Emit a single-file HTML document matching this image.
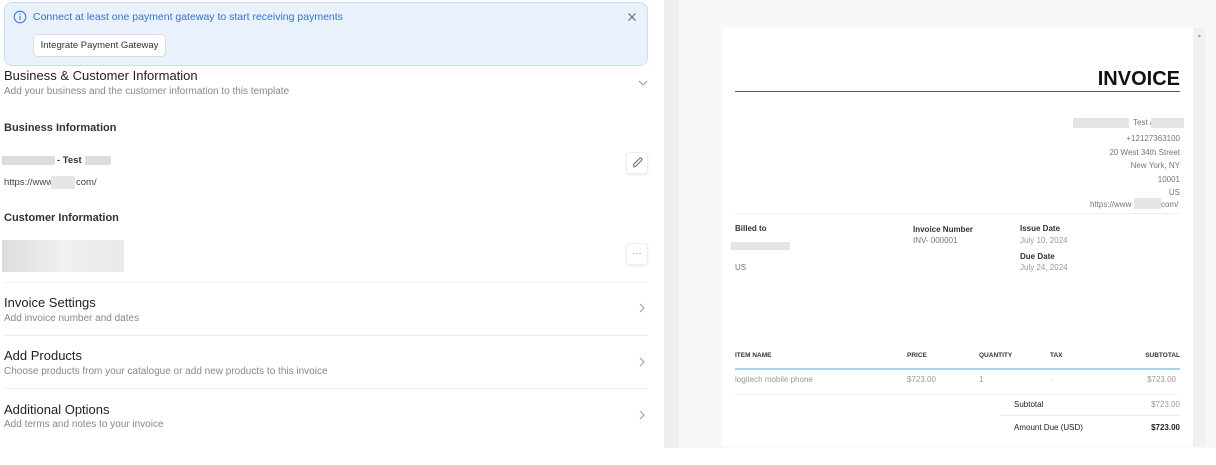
<!DOCTYPE html><html><head><style>
*{margin:0;padding:0;box-sizing:border-box}
body{width:1216px;height:465px;position:relative;background:#fff;font-family:"Liberation Sans",sans-serif;overflow:hidden}
.a{position:absolute;white-space:nowrap}
.t{font-size:13px;color:#222}
.s{font-size:10px;color:#888}
.b{font-size:11px;font-weight:bold;color:#333}
.hr{position:absolute;height:1px;background:#eee}
.g{position:absolute;background:#dcdcde}
.p{font-size:8px;color:#777}
.ph{font-size:8px;font-weight:bold;color:#333}
.th{font-size:6.5px;font-weight:bold;color:#333}
.r{text-align:right}
.ib{position:absolute;width:22px;height:22px;border:1px solid #eee;border-radius:4px;background:#fff;box-shadow:0 1px 2px rgba(0,0,0,.08)}
</style></head><body>
<div class="a" style="left:4px;top:2px;width:644px;height:64px;background:#e8f1fc;border:1px solid #c9ddf6;border-radius:8px"></div>
<svg class="a" style="left:13px;top:10px" width="14" height="14" viewBox="0 0 14 14"><circle cx="7" cy="7" r="5.8" fill="none" stroke="#3b7be0" stroke-width="1.1"/><line x1="7" y1="6" x2="7" y2="10" stroke="#3b7be0" stroke-width="1.1"/><circle cx="7" cy="4.2" r=".7" fill="#3b7be0"/></svg>
<div class="a" style="left:33px;top:11px;font-size:10.5px;color:#3573d9">Connect at least one payment gateway to start receiving payments</div>
<svg class="a" style="left:627px;top:12px" width="10" height="10"><path d="M1.5 1.5L8.5 8.5M8.5 1.5L1.5 8.5" stroke="#666" stroke-width="1.1"/></svg>
<div class="a" style="left:33px;top:34px;width:133px;height:23px;background:#fff;border:1px solid #ddd;border-radius:5px;font-size:9.5px;color:#333;line-height:21px;text-align:center">Integrate Payment Gateway</div>
<div class="a t" style="left:4px;top:68px">Business &amp; Customer Information</div>
<div class="a s" style="left:4px;top:86px">Add your business and the customer information to this template</div>
<svg class="a" style="left:638px;top:79px" width="10" height="8"><path d="M1 2L5 6L9 2" fill="none" stroke="#999" stroke-width="1"/></svg>
<div class="a b" style="left:4px;top:122px">Business Information</div>
<div class="g" style="left:2px;top:156px;width:53px;height:9px"></div>
<div class="a" style="left:57px;top:155px;font-size:9.5px;font-weight:bold;color:#333">- Test</div>
<div class="g" style="left:85px;top:156px;width:26px;height:9px"></div>
<div class="a" style="left:4px;top:177px;font-size:9.5px;color:#444">https://www.e</div>
<div class="g" style="left:51px;top:176px;width:24px;height:13px;background:#e6e6e8"></div>
<div class="a" style="left:76px;top:177px;font-size:9.5px;color:#444">com/</div>
<div class="ib" style="left:626px;top:152px"><svg width="20" height="20" viewBox="0 0 20 20"><path d="M7 14L6.5 11.5L12.5 5.5A1.2 1.2 0 0 1 14.5 7.5L8.5 13.5Z" fill="none" stroke="#666" stroke-width="1"/></svg></div>
<div class="a b" style="left:4px;top:212px">Customer Information</div>
<div class="a" style="left:2px;top:240px;width:122px;height:32px;background:linear-gradient(90deg,#ddd,#f0f0f0 50%,#e9e9ea)"></div>
<div class="ib" style="left:626px;top:243px;font-size:9px;color:#666;text-align:center;line-height:18px">···</div>
<div class="hr" style="left:4px;top:282px;width:644px"></div>
<div class="a t" style="left:4px;top:295px">Invoice Settings</div>
<div class="a s" style="left:4px;top:313px">Add invoice number and dates</div>
<div class="hr" style="left:4px;top:335px;width:644px"></div>
<div class="a t" style="left:4px;top:348px">Add Products</div>
<div class="a s" style="left:4px;top:366px">Choose products from your catalogue or add new products to this invoice</div>
<div class="hr" style="left:4px;top:388px;width:644px"></div>
<div class="a t" style="left:4px;top:402px">Additional Options</div>
<div class="a s" style="left:4px;top:419px">Add terms and notes to your invoice</div>
<svg class="a" style="left:638px;top:303px" width="8" height="120"><path d="M2 1L6 5L2 9M2 55L6 59L2 63M2 108L6 112L2 116" fill="none" stroke="#999" stroke-width="1"/></svg>

<div class="a" style="left:664px;top:0;width:15px;height:448px;background:#efefef"></div>
<div class="a" style="left:679px;top:0;width:537px;height:448px;background:#f7f8fa"></div>
<div class="a" style="left:722px;top:28px;width:471px;height:419px;background:#fff"></div>
<div class="a" style="left:1193px;top:28px;width:13px;height:419px;background:#f1f1f1"></div>
<div class="a" style="left:1197px;top:33px;font-size:5px;color:#999">▲</div>
<div class="a" style="right:36px;top:68px;font-size:20px;font-weight:bold;color:#111">INVOICE</div>
<div class="a" style="left:735px;top:91px;width:445px;height:1px;background:#555"></div>
<div class="g" style="left:1073px;top:118px;width:56px;height:10px;background:#e4e4e6"></div>
<div class="a p" style="left:1133px;top:118px">Test /</div>
<div class="g" style="left:1151px;top:118px;width:33px;height:10px;background:#e4e4e6"></div>
<div class="a p r" style="right:36px;top:132px;line-height:13.5px">+12127363100<br>20 West 34th Street<br>New York, NY<br>10001<br>US</div>
<div class="a p" style="left:1090px;top:200px">https://www</div>
<div class="g" style="left:1134px;top:198px;width:27px;height:11px;background:#e6e6e8"></div>
<div class="a p" style="left:1161px;top:200px">com/</div>
<div class="hr" style="left:735px;top:213px;width:445px"></div>
<div class="a ph" style="left:735px;top:224px">Billed to</div>
<div class="g" style="left:731px;top:242px;width:59px;height:8px;background:#e4e4e6"></div>
<div class="a p" style="left:735px;top:263px">US</div>
<div class="a ph" style="left:913px;top:225px">Invoice Number</div>
<div class="a p" style="left:913px;top:236px">INV- 000001</div>
<div class="a ph" style="left:1020px;top:224px">Issue Date</div>
<div class="a p" style="left:1020px;top:236px;color:#999">July 10, 2024</div>
<div class="a ph" style="left:1020px;top:252px">Due Date</div>
<div class="a p" style="left:1020px;top:263px;color:#999">July 24, 2024</div>
<div class="a th" style="left:735px;top:352px">ITEM NAME</div>
<div class="a th" style="left:907px;top:352px">PRICE</div>
<div class="a th" style="left:979px;top:352px">QUANTITY</div>
<div class="a th" style="left:1050px;top:352px">TAX</div>
<div class="a th" style="right:36px;top:352px">SUBTOTAL</div>
<div class="a" style="left:735px;top:368px;width:445px;height:2px;background:#a9d4f2"></div>
<div class="a p" style="left:735px;top:375px;color:#999">logitech mobile phone</div>
<div class="a p" style="left:907px;top:375px;color:#999">$723.00</div>
<div class="a p" style="left:979px;top:375px;color:#999">1</div>
<div class="a p" style="left:1050px;top:375px;color:#bbb">-</div>
<div class="a p" style="right:40px;top:375px;color:#999">$723.00</div>
<div class="hr" style="left:735px;top:394px;width:445px;background:#f1f1f1"></div>
<div class="a ph" style="left:1014px;top:400px;font-weight:normal;color:#222">Subtotal</div>
<div class="a p" style="right:36px;top:400px;color:#999">$723.00</div>
<div class="hr" style="left:1000px;top:415px;width:180px"></div>
<div class="a" style="left:1014px;top:423px;font-size:8px;color:#222">Amount Due (USD)</div>
<div class="a ph" style="right:36px;top:423px;color:#222">$723.00</div>
</body></html>
